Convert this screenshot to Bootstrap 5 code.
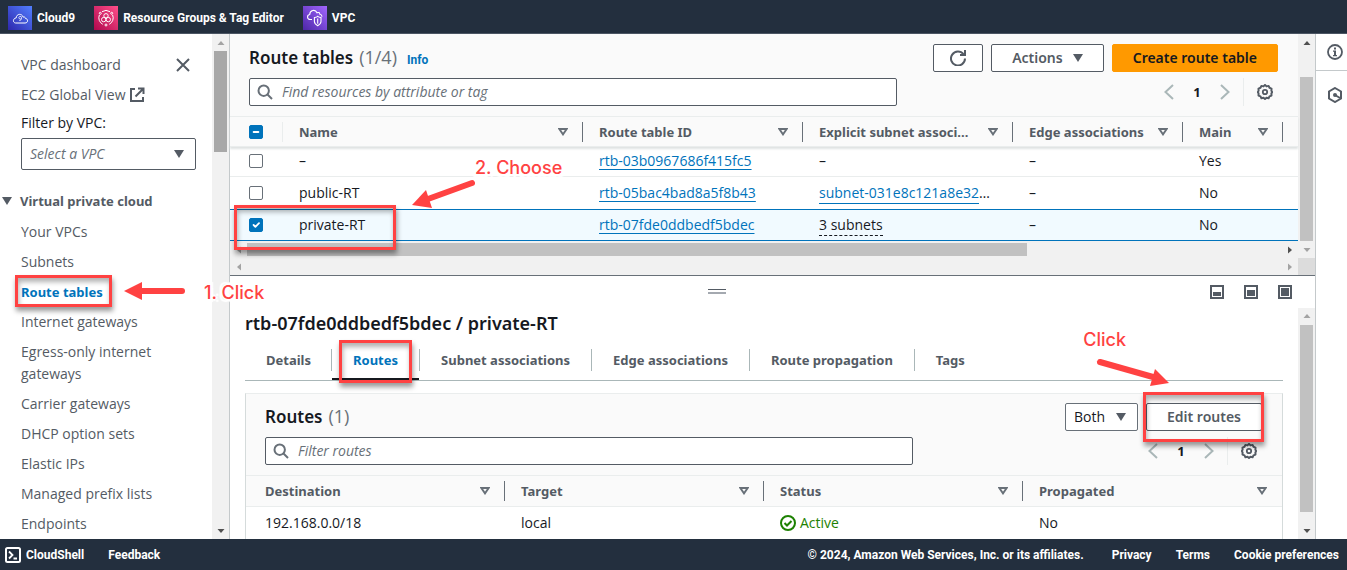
<!DOCTYPE html>
<html lang="en">
<head>
<meta charset="utf-8">
<meta name="viewport" content="width=device-width, initial-scale=1">
<title>Route tables | VPC Console</title>
<link href="https://cdn.jsdelivr.net/npm/bootstrap@5.3.0/dist/css/bootstrap.min.css" rel="stylesheet">
<style>
  :root { --ink:#16191f; --muted:#545b64; --soft:#687078; --blue:#0073bb; --navy:#232f3e; --hair:#eaeded; --callout:#ff4242; }
  body { font:14px/22px "Open Sans","Noto Sans",sans-serif; color:var(--ink); background:#fff; }
  a { color:var(--blue); }
  h1, h2 { font-family:"Noto Sans",sans-serif; font-size:17px; line-height:28px; font-weight:600; margin:0; }
  h2.split-title { font-size:18px; line-height:30px; }
  .title-line { gap:6px; }
  .title-line a { font:700 12px/16px Roboto,sans-serif; }
  .count { font-size:18px; font-weight:400; color:var(--soft); }
  .strong-sm { font-family:"Noto Sans",sans-serif; font-size:13px; font-weight:700; color:var(--muted); }
  svg { flex:none; display:block; }
  .fit { min-width:0; min-height:0; }

  .top-bar { background:var(--navy); height:34px; border-bottom:1px solid #4b5563; gap:19px; padding:3px 8px 0; }
  .top-bar a, .foot-bar, .foot-bar a { font:700 12px/16px Roboto,sans-serif; color:#fff; text-decoration:none; }
  .top-bar a { gap:5px; }
  .foot-bar { background:var(--navy); height:31px; padding:0 8px 0 5px; }

  .side { width:230px; border-right:1px solid #c4c9cb; }
  .side-body { padding:20px 16px 0 21px; }
  .side-body a { color:var(--muted); text-decoration:none; }
  .side-body li { margin-bottom:8px; }
  .side-body a.here { color:var(--blue); }
  .side-body .group-head { margin:20px 0 9px -19px; gap:8px; }
  .side-body .ext { margin-bottom:6px; }
  .icon-btn { background:none; border:0; padding:0; color:var(--muted); }
  .pick { border:1px solid var(--muted); border-radius:2px; background:#fff; color:var(--soft); height:32px; }
  .pick select, .both select { appearance:none; background:none; border:0; outline:0; color:inherit; font:inherit; padding:0 0 0 8px; }
  .pick select { font-style:italic; }
  .pick svg, .both svg { pointer-events:none; color:var(--muted); }

  .vbar, .hbar { background:#f1f1f1; display:flex; align-items:center; color:#505050; flex:none; }
  .vbar { width:17px; flex-direction:column; }
  .hbar { height:17px; }
  .vbar .end, .hbar .end { flex:none; display:flex; align-items:center; justify-content:center; width:17px; height:17px; }
  .vbar .thumb { width:13px; background:#c1c1c1; }
  .hbar .thumb { height:13px; background:#c1c1c1; }
  .off { color:#a3a3a3; }

  .upper { height:241px; }
  .pad-head { background:#fafafa; padding:10px 20px 10px 19px; }
  .find-row { margin-top:6px; }
  .tool-btn { height:28px; border:1px solid var(--muted); border-radius:2px; background:#fff; color:var(--muted); padding:0 20px;
    font:600 14px/20px "Noto Sans",sans-serif; display:flex; align-items:center; justify-content:center; gap:10px; white-space:nowrap; }
  .tool-btn.hot { background:#f90; border-color:#f90; color:var(--ink); }
  .tool-btn.square { width:50px; padding:0; }
  .find { height:28px; border:1px solid var(--muted); border-radius:2px; background:#fff; padding:0 7px; gap:9px; width:648px; color:var(--soft); }
  .find input { border:0; outline:0; background:none; flex:1; min-width:0; padding:0; font-style:italic; }
  .find input::placeholder { color:var(--soft); opacity:1; }
  .pager { gap:12px; }
  .pager .step { color:#aab7b8; }
  .pager .num { color:var(--ink); font:700 13px/20px "Noto Sans",sans-serif; width:16px; text-align:center; }
  .pager .gear { border-left:1px solid var(--hair); height:28px; padding:0 5px 0 13px; margin-left:-2px; display:flex; align-items:center; }

  .grid { width:100%; table-layout:fixed; border-collapse:separate; border-spacing:0; }
  .grid th { background:#fafafa; border-top:1px solid var(--hair); border-bottom:1px solid var(--hair); height:32px; padding:0 15px 0 16px; position:relative; white-space:nowrap; }
  .grid th svg { color:var(--soft); }
  .grid th:not(:last-child)::after { content:""; position:absolute; right:0; top:5px; height:20px; width:1px; background:var(--soft); }
  .grid th.pickcol::after { background:var(--hair); }
  .grid td { height:32px; padding:0 0 0 16px; white-space:nowrap; }
  .grid .pickcol { padding:0 0 0 19px; }
  .grid .form-check-input { width:14px; height:14px; margin:0; border:1px solid var(--soft); border-radius:2px; display:block; }
  .grid .form-check-input:checked, .grid .form-check-input:indeterminate { background-color:var(--blue); border-color:var(--blue); }
  .list-grid th { height:31px; }
  .list-grid thead { box-shadow:0 2px 2px #dfe3e3; position:relative; }
  .list-grid tr.tucked td { height:30px; padding-bottom:2px; border-bottom:1px solid var(--hair); }
  .list-grid tr.chosen td { background:#f1faff; border-top:1px solid var(--blue); border-bottom:1px solid var(--blue); }
  .list-grid td a { text-underline-offset:3px; }
  .list-grid td a.under { text-decoration:none; display:inline-block; line-height:20px; border-bottom:1px solid var(--blue); }
  .list-grid td a.dash { border-bottom:1px dashed var(--ink); color:inherit; }

  .split { border-top:1px solid var(--soft); }
  .split-bar { height:32px; padding:0 23px 0 0; }
  .split-bar .sizes { gap:20px; padding-left:6px; }
  .grip { width:18px; height:5px; border-top:1px solid var(--muted); border-bottom:2px solid #a4a9b0; }
  .split-body { padding:0 15px; }
  .tab-row { border-bottom:1px solid #aab7b8; margin:4px 0 0; padding-bottom:2px; }
  .tab-row button { background:none; border:0; padding:0 21px 0 22px; height:36px; position:relative; }
  .tab-row button:first-child { padding-left:21px; padding-right:20px; }
  .tab-row button + button::before { content:""; position:absolute; left:0; top:7px; height:22px; width:1px; background:#aab7b8; }
  .tab-row button.active { color:var(--blue); }
  .tab-row button.active::after { content:""; position:absolute; left:1px; right:0; bottom:-2px; height:2px; background:var(--ink); }
  .panel-box { border:1px solid #d5dbdb; border-top-color:var(--hair); margin-top:12px; }
  .panel-box .pad-head { padding-top:9px; }
  .panel-box .grid th:first-child, .panel-box .grid td:first-child { padding-left:19px; }
  .both { height:28px; width:73px; border:1px solid var(--soft); border-radius:2px; background:#fff; }
  .status-ok { color:#1d8102; gap:4px; }
  .rail { width:32px; border-left:1px solid #c4c9cb; color:var(--muted); }
  .rail button { height:37px; width:100%; padding-left:11px; }
  .rail button:first-child { border-bottom:1px solid #c4c9cb; }

  /* Tutorial callouts laid over the console */
  .callouts { position:absolute; inset:0; pointer-events:none; overflow:hidden; z-index:5; }
  .callouts > * { position:absolute; }
  .ring { border:3px solid var(--callout); box-shadow:1px 4px 5px rgba(0,0,0,.4), inset 1px 4px 5px rgba(0,0,0,.3); }
  .note { color:var(--callout); font:500 18px/24px Inter,sans-serif; white-space:nowrap;
    text-shadow:2px 0 1px #fff,-2px 0 1px #fff,0 2px 1px #fff,0 -2px 1px #fff,3px 3px 1px #fff,-3px 3px 1px #fff,3px -3px 1px #fff,-3px -3px 1px #fff; }
</style>
</head>
<body>
<svg width="0" height="0" class="position-absolute" aria-hidden="true">
  <defs>
    <symbol id="gear" viewBox="0 0 16 16"><path d="M8 .9l1.5 1.5 2.1-.5.9 1.9 2 .8-.1 2.1.8 1.300-.8 1.500.1 2.100-2 .8-.9 1.800-2.100-.400L8 15.100l-1.500-1.300-2.100.4-.9-1.800-2-.8.100-2.100L.8 8l.8-1.300-.1-2.100 2-.8.9-1.900 2.100.5z" fill="none" stroke="currentColor" stroke-width="2" stroke-linejoin="round"/><circle cx="8" cy="8" r="2.200" fill="none" stroke="currentColor" stroke-width="1.800"/></symbol>
    <symbol id="lens" viewBox="0 0 16 16"><circle cx="6.700" cy="6.700" r="5.200" fill="none" stroke="currentColor" stroke-width="2"/><path d="M10.500 10.500l4.500 4.500" stroke="currentColor" stroke-width="2"/></symbol>
    <symbol id="sort" viewBox="0 0 10 8"><path d="M1.300 1h7.400L5 6.400z" fill="none" stroke="currentColor" stroke-width="1.900"/></symbol>
    <symbol id="down" viewBox="0 0 10 8"><path d="M0 0h10L5 8z" fill="currentColor"/></symbol>
    <symbol id="prev" viewBox="0 0 16 16"><path d="M12 1L4.500 8l7.500 7" fill="none" stroke="currentColor" stroke-width="2"/></symbol>
    <symbol id="next" viewBox="0 0 16 16"><path d="M4 1l7.500 7L4 15" fill="none" stroke="currentColor" stroke-width="2"/></symbol>
    <symbol id="au" viewBox="0 0 8 8"><path d="M.5 6h7L4 2z" fill="currentColor"/></symbol>
    <symbol id="ad" viewBox="0 0 8 8"><path d="M.5 2h7L4 6z" fill="currentColor"/></symbol>
    <symbol id="al" viewBox="0 0 8 8"><path d="M6 .5v7L2 4z" fill="currentColor"/></symbol>
    <symbol id="ar" viewBox="0 0 8 8"><path d="M2 .5v7L6 4z" fill="currentColor"/></symbol>
  </defs>
</svg>

<div class="d-flex flex-column vh-100 position-relative overflow-hidden">
  <nav class="top-bar d-flex align-items-center flex-shrink-0">
    <a href="#" class="d-flex align-items-center">
      <svg width="24" height="24" viewBox="0 0 24 24"><defs><linearGradient id="g1" x1="0" y1="1" x2="1" y2="0"><stop stop-color="#2e27ad"/><stop offset="1" stop-color="#527fff"/></linearGradient></defs><rect width="24" height="24" fill="url(#g1)"/><path d="M7.500 17h9.600c3.200 0 3.300-4.300.3-4.600-.100-1.300-1.300-1.800-2.200-1.200-1.100-4-6.700-3.800-7 .7-3.500.5-3.600 4.700-.7 5.100z" fill="none" stroke="#fff"/><path d="M13.500 11.500a1.300 1.300 0 10-.2.900M13.500 11.500c.2 1.800-.5 3-2.200 3" fill="none" stroke="#fff" stroke-width=".8"/></svg>
      <span>Cloud9</span></a>
    <a href="#" class="d-flex align-items-center">
      <svg width="24" height="24" viewBox="0 0 24 24"><defs><linearGradient id="g2" x1="0" y1="1" x2="1" y2="0"><stop stop-color="#b0084d"/><stop offset="1" stop-color="#ff4f8b"/></linearGradient></defs><rect width="24" height="24" fill="url(#g2)"/><g fill="none" stroke="#fff"><path d="M8 5.700a7.200 7.200 0 018 0M18.600 9a7.200 7.200 0 01-3.400 9.300M8.800 18.300A7.200 7.200 0 015.400 9"/><circle cx="12" cy="9.800" r="2.200"/><circle cx="9.700" cy="13.600" r="2.200"/><circle cx="14.300" cy="13.600" r="2.200"/><circle cx="6.300" cy="7.300" r="1"/><circle cx="17.700" cy="7.300" r="1"/><circle cx="12" cy="19" r="1"/></g></svg>
      <span>Resource Groups &amp; Tag Editor</span></a>
    <a href="#" class="d-flex align-items-center">
      <svg width="24" height="24" viewBox="0 0 24 24"><defs><linearGradient id="g3" x1="0" y1="1" x2="1" y2="0"><stop stop-color="#4d27a8"/><stop offset="1" stop-color="#a166ff"/></linearGradient></defs><rect width="24" height="24" fill="url(#g3)"/><path d="M9 13.500H7.300c-3.400 0-3.700-4.500-.6-5 .2-4.500 5.600-5.700 7.300-1.700 1.400-.8 2.700-.2 2.900 1.500 1.500.2 2.100 1.100 2.100 2.400M14.700 10.300c1.200 1 2.200 1.100 3.300 1.300v3.900c0 2-1.600 3.200-3.300 4.200-1.700-1-3.300-2.200-3.300-4.200v-3.900c1.100-.2 2.100-.3 3.300-1.300zM14.700 12.500v5.200" fill="none" stroke="#fff" stroke-width="1.100"/></svg>
      <span>VPC</span></a>
  </nav>

  <div class="d-flex flex-grow-1 fit">
    <aside class="side d-flex flex-shrink-0 overflow-hidden">
      <div class="side-body flex-grow-1">
        <div class="d-flex justify-content-between align-items-center mb-2">
          <a href="#">VPC dashboard</a>
          <button class="icon-btn me-1" aria-label="Close navigation"><svg width="16" height="16" viewBox="0 0 16 16"><path d="M1 2l12 12M13 2L1 14" stroke="currentColor" stroke-width="2"/></svg></button>
        </div>
        <a href="#" class="ext d-flex align-items-center gap-1">EC2 Global View
          <svg width="16" height="16" viewBox="0 0 16 16"><path d="M6 2H2v12h12v-4M9 1.500h5.500V7M14.500 1.500L6.500 9.500" fill="none" stroke="currentColor" stroke-width="2"/></svg></a>
        <label for="vpc" class="d-block mb-1">Filter by VPC:</label>
        <div class="pick d-flex align-items-center position-relative">
          <select id="vpc" class="w-100"><option>Select a VPC</option></select>
          <svg class="me-2 position-absolute end-0" width="16" height="8" viewBox="-3 0 16 8"><path d="M0 0h10L5 8z" fill="currentColor"/></svg>
        </div>
        <div class="group-head d-flex align-items-center strong-sm"><svg width="10" height="8"><use href="#down"/></svg><span>Virtual private cloud</span></div>
        <ul class="list-unstyled m-0">
          <li><a href="#">Your VPCs</a></li>
          <li><a href="#">Subnets</a></li>
          <li><a href="#" class="strong-sm here">Route tables</a></li>
          <li><a href="#">Internet gateways</a></li>
          <li><a href="#">Egress-only internet gateways</a></li>
          <li><a href="#">Carrier gateways</a></li>
          <li><a href="#">DHCP option sets</a></li>
          <li><a href="#">Elastic IPs</a></li>
          <li><a href="#">Managed prefix lists</a></li>
          <li><a href="#">Endpoints</a></li>
        </ul>
      </div>
      <div class="vbar"><span class="end off"><svg width="8" height="8"><use href="#au"/></svg></span><span class="thumb" style="height:101px;background:#a8a8a8"></span><span class="end mt-auto"><svg width="8" height="8"><use href="#ad"/></svg></span></div>
    </aside>

    <main class="d-flex flex-column flex-grow-1 fit">
      <section class="upper d-flex flex-shrink-0">
        <div class="d-flex flex-column flex-grow-1 fit">
          <div class="pad-head">
            <div class="d-flex align-items-center justify-content-between">
              <div class="title-line d-flex align-items-baseline"><h1>Route tables</h1><span class="count">(1/4)</span><a href="#" class="ms-1 text-decoration-none">Info</a></div>
              <div class="d-flex gap-2">
                <button class="tool-btn square" aria-label="Refresh"><svg width="16" height="16" viewBox="0 0 16 16"><path d="M13.500 4.200A7 7 0 1015 8.500M15 0v5h-5" fill="none" stroke="currentColor" stroke-width="2"/></svg></button>
                <button class="tool-btn">Actions <svg width="10" height="8"><use href="#down"/></svg></button>
                <button class="tool-btn hot">Create route table</button>
              </div>
            </div>
            <div class="find-row d-flex align-items-center justify-content-between">
              <label class="find d-flex align-items-center"><svg width="16" height="16"><use href="#lens"/></svg><input type="search" placeholder="Find resources by attribute or tag" aria-label="Find resources"></label>
              <div class="pager d-flex align-items-center">
                <button class="icon-btn step" aria-label="Previous"><svg width="16" height="16"><use href="#prev"/></svg></button><span class="num">1</span><button class="icon-btn step" aria-label="Next"><svg width="16" height="16"><use href="#next"/></svg></button>
                <button class="icon-btn gear" aria-label="Preferences"><svg width="16" height="16"><use href="#gear"/></svg></button>
              </div>
            </div>
          </div>
          <table class="grid list-grid">
            <colgroup><col style="width:53px"><col style="width:300px"><col style="width:220px"><col style="width:210px"><col style="width:170px"><col style="width:100px"><col></colgroup>
            <thead><tr>
              <th class="pickcol"><input id="all" class="form-check-input" type="checkbox" aria-label="Select all"></th>
              <th><div class="d-flex align-items-center justify-content-between"><span class="strong-sm">Name</span><svg width="10" height="8"><use href="#sort"/></svg></div></th>
              <th><div class="d-flex align-items-center justify-content-between"><span class="strong-sm">Route table ID</span><svg width="10" height="8"><use href="#sort"/></svg></div></th>
              <th><div class="d-flex align-items-center justify-content-between"><span class="strong-sm">Explicit subnet associ...</span><svg width="10" height="8"><use href="#sort"/></svg></div></th>
              <th><div class="d-flex align-items-center justify-content-between"><span class="strong-sm">Edge associations</span><svg width="10" height="8"><use href="#sort"/></svg></div></th>
              <th><div class="d-flex align-items-center justify-content-between"><span class="strong-sm">Main</span><svg width="10" height="8"><use href="#sort"/></svg></div></th>
              <th></th>
            </tr></thead>
            <tbody>
              <tr class="tucked"><td class="pickcol"><input class="form-check-input" type="checkbox" aria-label="Select unnamed"></td><td>–</td><td><a href="#">rtb-03b0967686f415fc5</a></td><td>–</td><td>–</td><td>Yes</td><td></td></tr>
              <tr><td class="pickcol"><input class="form-check-input" type="checkbox" aria-label="Select public-RT"></td><td>public-RT</td><td><a href="#">rtb-05bac4bad8a5f8b43</a></td><td><a class="under" href="#">subnet-031e8c121a8e32</a>…</td><td>–</td><td>No</td><td></td></tr>
              <tr class="chosen"><td class="pickcol"><input class="form-check-input" type="checkbox" checked aria-label="Select private-RT"></td><td>private-RT</td><td><a href="#">rtb-07fde0ddbedf5bdec</a></td><td><a class="under dash" href="#">3 subnets</a></td><td>–</td><td>No</td><td></td></tr>
            </tbody>
          </table>
          <div class="hbar mt-auto"><span class="end off"><svg width="8" height="8"><use href="#al"/></svg></span><span class="thumb" style="width:73%"></span><span class="end ms-auto"><svg width="8" height="8"><use href="#ar"/></svg></span></div>
          <div class="hbar off"><span class="end"><svg width="8" height="8"><use href="#al"/></svg></span><span class="end ms-auto"><svg width="8" height="8"><use href="#ar"/></svg></span></div>
        </div>
        <div class="vbar"><span class="end"><svg width="8" height="8"><use href="#au"/></svg></span><span class="thumb flex-grow-1" style="margin-top:26px"></span><span class="end off"><svg width="8" height="8"><use href="#ad"/></svg></span><span class="end" style="background:#dcdcdc"></span></div>
      </section>

      <section class="split d-flex flex-column flex-grow-1 fit">
        <div class="split-bar d-flex align-items-center">
          <div class="flex-grow-1 d-flex justify-content-center"><span class="grip"></span></div>
          <div class="sizes d-flex">
            <button class="icon-btn" aria-label="Small"><svg width="14" height="14" viewBox="0 0 14 14"><path d="M1 1h12v12H1z" fill="none" stroke="currentColor" stroke-width="2"/><path d="M3 7h8v4H3z" fill="currentColor"/></svg></button>
            <button class="icon-btn" aria-label="Medium"><svg width="14" height="14" viewBox="0 0 14 14"><path d="M1 1h12v12H1z" fill="none" stroke="currentColor" stroke-width="2"/><path d="M3 5h8v6H3z" fill="currentColor"/></svg></button>
            <button class="icon-btn" aria-label="Full"><svg width="14" height="14" viewBox="0 0 14 14"><path d="M1 1h12v12H1z" fill="none" stroke="currentColor" stroke-width="2"/><path d="M3 3h8v8H3z" fill="currentColor"/></svg></button>
          </div>
        </div>
        <div class="d-flex flex-grow-1 overflow-hidden">
          <div class="split-body flex-grow-1 fit">
            <h2 class="split-title">rtb-07fde0ddbedf5bdec / private-RT</h2>
            <div class="tab-row d-flex" role="tablist">
              <button class="strong-sm" role="tab">Details</button><button class="strong-sm active" role="tab">Routes</button><button class="strong-sm" role="tab">Subnet associations</button><button class="strong-sm" role="tab">Edge associations</button><button class="strong-sm" role="tab">Route propagation</button><button class="strong-sm" role="tab">Tags</button>
            </div>
            <div class="panel-box">
              <div class="pad-head">
                <div class="d-flex align-items-center justify-content-between">
                  <div class="title-line d-flex align-items-baseline"><h2>Routes</h2><span class="count">(1)</span></div>
                  <div class="d-flex gap-2">
                    <div class="both d-flex align-items-center position-relative"><select class="w-100" aria-label="Route kind"><option>Both</option></select><svg class="position-absolute end-0 me-2" width="14" height="8" viewBox="-1 0 14 8"><path d="M0 0h10L5 8z" fill="currentColor"/></svg></div>
                    <button class="tool-btn">Edit routes</button>
                  </div>
                </div>
                <div class="find-row d-flex align-items-center justify-content-between">
                  <label class="find d-flex align-items-center"><svg width="16" height="16"><use href="#lens"/></svg><input type="search" placeholder="Filter routes" aria-label="Filter routes"></label>
                  <div class="pager d-flex align-items-center">
                    <button class="icon-btn step" aria-label="Previous"><svg width="16" height="16"><use href="#prev"/></svg></button><span class="num">1</span><button class="icon-btn step" aria-label="Next"><svg width="16" height="16"><use href="#next"/></svg></button>
                    <button class="icon-btn gear" aria-label="Preferences"><svg width="16" height="16"><use href="#gear"/></svg></button>
                  </div>
                </div>
              </div>
              <table class="grid">
                <thead><tr>
                  <th><div class="d-flex align-items-center justify-content-between"><span class="strong-sm">Destination</span><svg width="10" height="8"><use href="#sort"/></svg></div></th>
                  <th><div class="d-flex align-items-center justify-content-between"><span class="strong-sm">Target</span><svg width="10" height="8"><use href="#sort"/></svg></div></th>
                  <th><div class="d-flex align-items-center justify-content-between"><span class="strong-sm">Status</span><svg width="10" height="8"><use href="#sort"/></svg></div></th>
                  <th><div class="d-flex align-items-center justify-content-between"><span class="strong-sm">Propagated</span><svg width="10" height="8"><use href="#sort"/></svg></div></th>
                </tr></thead>
                <tbody><tr><td>192.168.0.0/18</td><td>local</td><td><span class="status-ok d-flex align-items-center"><svg width="16" height="16" viewBox="0 0 16 16"><circle cx="8" cy="8" r="7" fill="none" stroke="currentColor" stroke-width="2"/><path d="M4.500 8l2.500 2.500 4.500-4.500" fill="none" stroke="currentColor" stroke-width="2"/></svg>Active</span></td><td>No</td></tr></tbody>
              </table>
            </div>
          </div>
          <div class="vbar"><span class="end off"><svg width="8" height="8"><use href="#au"/></svg></span><span class="thumb flex-grow-1" style="margin-bottom:10px"></span><span class="end"><svg width="8" height="8"><use href="#ad"/></svg></span></div>
        </div>
      </section>
    </main>

    <aside class="rail flex-shrink-0">
      <button class="icon-btn" aria-label="Info"><svg width="16" height="16" viewBox="0 0 16 16"><circle cx="8" cy="8" r="7" fill="none" stroke="currentColor" stroke-width="1.800"/><path d="M7 3.500h2v2H7zM6 6.500h3V11h1v1.200H6V11h1V7.700H6z" fill="currentColor"/></svg></button>
      <button class="icon-btn" aria-label="Network"><svg width="16" height="16" viewBox="0 0 16 16"><path d="M8 1l6 3.500v7L8 15l-6-3.500v-7z" fill="none" stroke="currentColor" stroke-width="2"/><circle cx="8" cy="8" r="2" fill="currentColor"/><path d="M8 8l5 3" stroke="currentColor" stroke-width="2"/></svg></button>
    </aside>
  </div>

  <footer class="foot-bar d-flex align-items-center flex-shrink-0">
    <a href="#" class="d-flex align-items-center" style="gap:5px"><svg width="16" height="16" viewBox="0 0 16 16"><rect x="1" y="1" width="14" height="14" rx="1.500" fill="none" stroke="#fff" stroke-width="2"/><path d="M4 4.500L7.500 8 4 11.500M8.500 11.500H12" fill="none" stroke="#fff" stroke-width="1.800"/></svg>CloudShell</a>
    <a href="#" class="ms-4">Feedback</a>
    <span class="ms-auto">© 2024, Amazon Web Services, Inc. or its affiliates.</span>
    <a href="#" style="margin-left:28px">Privacy</a><a href="#" class="ms-4">Terms</a><a href="#" class="ms-4">Cookie preferences</a>
  </footer>

  <div class="callouts">
    <div class="ring" style="left:15px;top:275px;width:97px;height:32px"></div>
    <div class="ring" style="left:234px;top:205px;width:162px;height:45px"></div>
    <div class="ring" style="left:339px;top:340px;width:73px;height:43px"></div>
    <div class="ring" style="right:83px;top:392px;width:121px;height:50px"></div>
    <svg style="left:124px;top:281px" width="64" height="20" viewBox="0 0 64 20" fill="#ff4242" stroke="#ff4242"><path d="M0 10L18 1v18z" stroke="none"/><path d="M16 10h42" stroke-width="6" stroke-linecap="round"/></svg>
    <svg style="left:412px;top:178px" width="66" height="32" viewBox="0 0 66 32" fill="#ff4242" stroke="#ff4242"><path d="M0 27L14 12l6 18z" stroke="none"/><path d="M16 21L60 5" stroke-width="6" stroke-linecap="round"/></svg>
    <svg style="right:176px;top:356px" width="76" height="34" viewBox="0 0 76 34" fill="#ff4242" stroke="#ff4242"><path d="M74 27L60 13l-5 17z" stroke="none"/><path d="M5 6l53 15" stroke-width="6" stroke-linecap="round"/></svg>
    <span class="note" style="left:204px;top:281px">1. Click</span>
    <span class="note" style="left:475px;top:156px">2. Choose</span>
    <span class="note" style="right:221px;top:328px">Click</span>
  </div>
</div>
<script src="https://cdn.jsdelivr.net/npm/bootstrap@5.3.0/dist/js/bootstrap.bundle.min.js"></script>
<script>document.getElementById('all').indeterminate = true;</script>
</body>
</html>
